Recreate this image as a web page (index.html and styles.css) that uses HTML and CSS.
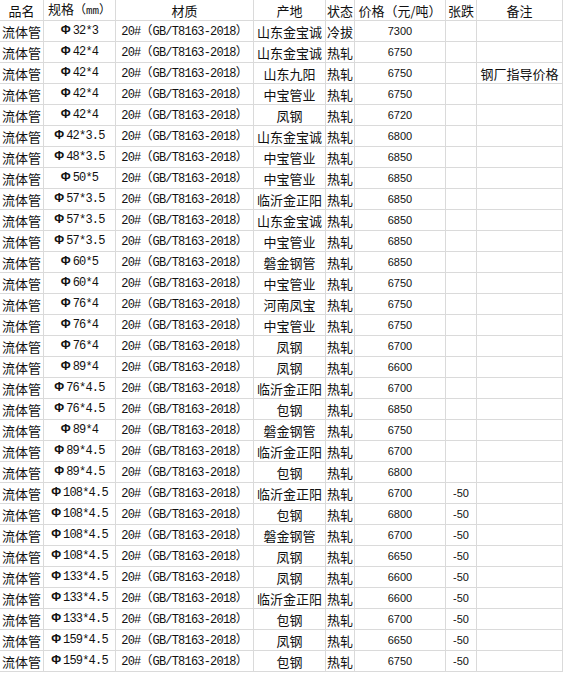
FILE: index.html
```html
<!DOCTYPE html>
<html lang="zh">
<head>
<meta charset="utf-8">
<title>流体管价格</title>
<link rel="stylesheet" href="styles.css">
</head>
<body>
<table class="price-table">
<colgroup>
<col class="c-name"><col class="c-spec"><col class="c-mat"><col class="c-origin"><col class="c-state"><col class="c-price"><col class="c-chg"><col class="c-note">
</colgroup>
<thead>
<tr><th>品名</th><th>规格<span class="fw">（</span><span class="mm">mm</span><span class="fw">）</span></th><th>材质</th><th>产地</th><th>状态</th><th>价格（元/吨）</th><th>张跌</th><th>备注</th></tr>
</thead>
<tbody>
<tr><td>流体管</td><td class="spec"><b class="phi">Φ</b>32*3</td><td class="mono">20#<span class="fw">（</span>GB/T8163-2018<span class="fw">）</span></td><td>山东金宝诚</td><td>冷拔</td><td class="num">7300</td><td class="num"></td><td></td></tr>
<tr><td>流体管</td><td class="spec"><b class="phi">Φ</b>42*4</td><td class="mono">20#<span class="fw">（</span>GB/T8163-2018<span class="fw">）</span></td><td>山东金宝诚</td><td>热轧</td><td class="num">6750</td><td class="num"></td><td></td></tr>
<tr><td>流体管</td><td class="spec"><b class="phi">Φ</b>42*4</td><td class="mono">20#<span class="fw">（</span>GB/T8163-2018<span class="fw">）</span></td><td>山东九阳</td><td>热轧</td><td class="num">6750</td><td class="num"></td><td>钢厂指导价格</td></tr>
<tr><td>流体管</td><td class="spec"><b class="phi">Φ</b>42*4</td><td class="mono">20#<span class="fw">（</span>GB/T8163-2018<span class="fw">）</span></td><td>中宝管业</td><td>热轧</td><td class="num">6750</td><td class="num"></td><td></td></tr>
<tr><td>流体管</td><td class="spec"><b class="phi">Φ</b>42*4</td><td class="mono">20#<span class="fw">（</span>GB/T8163-2018<span class="fw">）</span></td><td>凤钢</td><td>热轧</td><td class="num">6720</td><td class="num"></td><td></td></tr>
<tr><td>流体管</td><td class="spec"><b class="phi">Φ</b>42*3.5</td><td class="mono">20#<span class="fw">（</span>GB/T8163-2018<span class="fw">）</span></td><td>山东金宝诚</td><td>热轧</td><td class="num">6800</td><td class="num"></td><td></td></tr>
<tr><td>流体管</td><td class="spec"><b class="phi">Φ</b>48*3.5</td><td class="mono">20#<span class="fw">（</span>GB/T8163-2018<span class="fw">）</span></td><td>中宝管业</td><td>热轧</td><td class="num">6850</td><td class="num"></td><td></td></tr>
<tr><td>流体管</td><td class="spec"><b class="phi">Φ</b>50*5</td><td class="mono">20#<span class="fw">（</span>GB/T8163-2018<span class="fw">）</span></td><td>中宝管业</td><td>热轧</td><td class="num">6850</td><td class="num"></td><td></td></tr>
<tr><td>流体管</td><td class="spec"><b class="phi">Φ</b>57*3.5</td><td class="mono">20#<span class="fw">（</span>GB/T8163-2018<span class="fw">）</span></td><td>临沂金正阳</td><td>热轧</td><td class="num">6850</td><td class="num"></td><td></td></tr>
<tr><td>流体管</td><td class="spec"><b class="phi">Φ</b>57*3.5</td><td class="mono">20#<span class="fw">（</span>GB/T8163-2018<span class="fw">）</span></td><td>山东金宝诚</td><td>热轧</td><td class="num">6850</td><td class="num"></td><td></td></tr>
<tr><td>流体管</td><td class="spec"><b class="phi">Φ</b>57*3.5</td><td class="mono">20#<span class="fw">（</span>GB/T8163-2018<span class="fw">）</span></td><td>中宝管业</td><td>热轧</td><td class="num">6850</td><td class="num"></td><td></td></tr>
<tr><td>流体管</td><td class="spec"><b class="phi">Φ</b>60*5</td><td class="mono">20#<span class="fw">（</span>GB/T8163-2018<span class="fw">）</span></td><td>磐金钢管</td><td>热轧</td><td class="num">6850</td><td class="num"></td><td></td></tr>
<tr><td>流体管</td><td class="spec"><b class="phi">Φ</b>60*4</td><td class="mono">20#<span class="fw">（</span>GB/T8163-2018<span class="fw">）</span></td><td>中宝管业</td><td>热轧</td><td class="num">6750</td><td class="num"></td><td></td></tr>
<tr><td>流体管</td><td class="spec"><b class="phi">Φ</b>76*4</td><td class="mono">20#<span class="fw">（</span>GB/T8163-2018<span class="fw">）</span></td><td>河南凤宝</td><td>热轧</td><td class="num">6750</td><td class="num"></td><td></td></tr>
<tr><td>流体管</td><td class="spec"><b class="phi">Φ</b>76*4</td><td class="mono">20#<span class="fw">（</span>GB/T8163-2018<span class="fw">）</span></td><td>中宝管业</td><td>热轧</td><td class="num">6750</td><td class="num"></td><td></td></tr>
<tr><td>流体管</td><td class="spec"><b class="phi">Φ</b>76*4</td><td class="mono">20#<span class="fw">（</span>GB/T8163-2018<span class="fw">）</span></td><td>凤钢</td><td>热轧</td><td class="num">6700</td><td class="num"></td><td></td></tr>
<tr><td>流体管</td><td class="spec"><b class="phi">Φ</b>89*4</td><td class="mono">20#<span class="fw">（</span>GB/T8163-2018<span class="fw">）</span></td><td>凤钢</td><td>热轧</td><td class="num">6600</td><td class="num"></td><td></td></tr>
<tr><td>流体管</td><td class="spec"><b class="phi">Φ</b>76*4.5</td><td class="mono">20#<span class="fw">（</span>GB/T8163-2018<span class="fw">）</span></td><td>临沂金正阳</td><td>热轧</td><td class="num">6700</td><td class="num"></td><td></td></tr>
<tr><td>流体管</td><td class="spec"><b class="phi">Φ</b>76*4.5</td><td class="mono">20#<span class="fw">（</span>GB/T8163-2018<span class="fw">）</span></td><td>包钢</td><td>热轧</td><td class="num">6850</td><td class="num"></td><td></td></tr>
<tr><td>流体管</td><td class="spec"><b class="phi">Φ</b>89*4</td><td class="mono">20#<span class="fw">（</span>GB/T8163-2018<span class="fw">）</span></td><td>磐金钢管</td><td>热轧</td><td class="num">6750</td><td class="num"></td><td></td></tr>
<tr><td>流体管</td><td class="spec"><b class="phi">Φ</b>89*4.5</td><td class="mono">20#<span class="fw">（</span>GB/T8163-2018<span class="fw">）</span></td><td>临沂金正阳</td><td>热轧</td><td class="num">6700</td><td class="num"></td><td></td></tr>
<tr><td>流体管</td><td class="spec"><b class="phi">Φ</b>89*4.5</td><td class="mono">20#<span class="fw">（</span>GB/T8163-2018<span class="fw">）</span></td><td>包钢</td><td>热轧</td><td class="num">6800</td><td class="num"></td><td></td></tr>
<tr><td>流体管</td><td class="spec"><b class="phi">Φ</b>108*4.5</td><td class="mono">20#<span class="fw">（</span>GB/T8163-2018<span class="fw">）</span></td><td>临沂金正阳</td><td>热轧</td><td class="num">6700</td><td class="num">-50</td><td></td></tr>
<tr><td>流体管</td><td class="spec"><b class="phi">Φ</b>108*4.5</td><td class="mono">20#<span class="fw">（</span>GB/T8163-2018<span class="fw">）</span></td><td>包钢</td><td>热轧</td><td class="num">6800</td><td class="num">-50</td><td></td></tr>
<tr><td>流体管</td><td class="spec"><b class="phi">Φ</b>108*4.5</td><td class="mono">20#<span class="fw">（</span>GB/T8163-2018<span class="fw">）</span></td><td>磐金钢管</td><td>热轧</td><td class="num">6700</td><td class="num">-50</td><td></td></tr>
<tr><td>流体管</td><td class="spec"><b class="phi">Φ</b>108*4.5</td><td class="mono">20#<span class="fw">（</span>GB/T8163-2018<span class="fw">）</span></td><td>凤钢</td><td>热轧</td><td class="num">6650</td><td class="num">-50</td><td></td></tr>
<tr><td>流体管</td><td class="spec"><b class="phi">Φ</b>133*4.5</td><td class="mono">20#<span class="fw">（</span>GB/T8163-2018<span class="fw">）</span></td><td>凤钢</td><td>热轧</td><td class="num">6600</td><td class="num">-50</td><td></td></tr>
<tr><td>流体管</td><td class="spec"><b class="phi">Φ</b>133*4.5</td><td class="mono">20#<span class="fw">（</span>GB/T8163-2018<span class="fw">）</span></td><td>临沂金正阳</td><td>热轧</td><td class="num">6600</td><td class="num">-50</td><td></td></tr>
<tr><td>流体管</td><td class="spec"><b class="phi">Φ</b>133*4.5</td><td class="mono">20#<span class="fw">（</span>GB/T8163-2018<span class="fw">）</span></td><td>包钢</td><td>热轧</td><td class="num">6700</td><td class="num">-50</td><td></td></tr>
<tr><td>流体管</td><td class="spec"><b class="phi">Φ</b>159*4.5</td><td class="mono">20#<span class="fw">（</span>GB/T8163-2018<span class="fw">）</span></td><td>凤钢</td><td>热轧</td><td class="num">6650</td><td class="num">-50</td><td></td></tr>
<tr><td>流体管</td><td class="spec"><b class="phi">Φ</b>159*4.5</td><td class="mono">20#<span class="fw">（</span>GB/T8163-2018<span class="fw">）</span></td><td>包钢</td><td>热轧</td><td class="num">6750</td><td class="num">-50</td><td></td></tr>
</tbody>
</table>
</body>
</html>
```
FILE: styles.css
```css
html, body {
  margin: 0;
  padding: 0;
  background: #ffffff;
}

.price-table {
  border-collapse: separate;
  border-spacing: 0;
  table-layout: fixed;
  width: 563px;
  font-family: "Noto Sans CJK SC", "Noto Sans", sans-serif;
  font-size: 13px;
  color: #111;
  text-spacing-trim: space-all;
}

.c-name { width: 44px; }
.c-spec { width: 72px; }
.c-mat { width: 138px; }
.c-origin { width: 72px; }
.c-state { width: 29px; }
.c-price { width: 91px; }
.c-chg { width: 31px; }
.c-note { width: 86px; }

.price-table th,
.price-table td {
  box-sizing: border-box;
  height: 21px;
  padding: 0;
  border-right: 1px solid #dadada;
  border-bottom: 1px solid #dadada;
  text-align: center;
  vertical-align: middle;
  white-space: nowrap;
  overflow: hidden;
  font-weight: normal;
  line-height: 15px;
}

.mono,
.spec,
.mm {
  font-family: "Liberation Mono", monospace;
  font-size: 12px;
  letter-spacing: -0.8px;
}

.mm {
  font-size: 11px;
  letter-spacing: 0;
}

.fw {
  font-family: "Noto Sans CJK SC", sans-serif;
  font-size: 12px;
  letter-spacing: 0;
  text-spacing-trim: space-all;
}

.phi {
  font-family: "Liberation Sans", Arial, sans-serif;
  font-weight: bold;
  font-size: 12px;
  letter-spacing: 0;
  margin-right: 2px;
}

.num {
  font-family: "Liberation Sans", Arial, sans-serif;
  font-size: 11px;
}
```
